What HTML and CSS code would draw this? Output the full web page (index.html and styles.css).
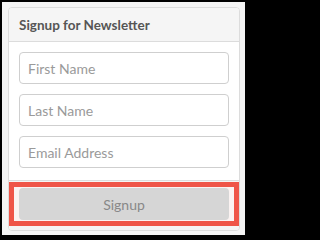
FILE: index.html
```html
<!DOCTYPE html>
<html lang="en">
<head>
<meta charset="utf-8">
<title>Signup for Newsletter</title>
<link rel="stylesheet" href="styles.css">
</head>
<body>
<div class="panel">
  <div class="panel-heading">Signup for Newsletter</div>
  <div class="panel-body">
    <input class="field" type="text" placeholder="First Name">
    <input class="field" type="text" placeholder="Last Name">
    <input class="field" type="email" placeholder="Email Address">
  </div>
  <div class="panel-footer">
    <div class="highlight">
      <button class="btn" type="button">Signup</button>
    </div>
  </div>
</div>
</body>
</html>
```

FILE: styles.css
```css
html {
  background: #000;
  height: 100%;
}
body {
  margin: 2px;
  width: 243px;
  height: 233px;
  box-sizing: border-box;
  background: #f4f4f4;
  padding: 5px 5px 0 6px;
  font-family: Lato, "Open Sans", sans-serif;
}
.panel {
  background: #fff;
  border: 1px solid #dcdcdc;
  border-radius: 4px;
  overflow: hidden;
}
.panel-heading {
  height: 34px;
  box-sizing: border-box;
  padding: 1px 10px 0;
  display: flex;
  align-items: center;
  background: #f5f5f5;
  border-bottom: 1px solid #dcdcdc;
  color: #555;
  font-size: 13.5px;
  font-weight: 700;
}
.panel-body {
  padding: 10px 10px 12px;
  display: flex;
  flex-direction: column;
  gap: 10px;
}
.field {
  height: 32px;
  box-sizing: border-box;
  border: 1px solid #cfcfcf;
  border-radius: 4px;
  padding: 0 8px;
  font-family: inherit;
  font-size: 14px;
  color: #555;
  background: #fff;
  margin: 0;
}
.field::placeholder {
  color: #9a9a9a;
}
.panel-footer {
  background: #f5f5f5;
  border-top: 1px solid #dcdcdc;
  padding: 1px 0 4px;
}
.highlight {
  border: 5px solid #ef5548;
  background: #fbf3f2;
  padding: 1px 5px;
}
.btn {
  display: block;
  width: 100%;
  height: 32px;
  border: 0;
  border-radius: 4px;
  background: #d6d6d6;
  color: #888;
  font-family: inherit;
  font-size: 14px;
}
```
